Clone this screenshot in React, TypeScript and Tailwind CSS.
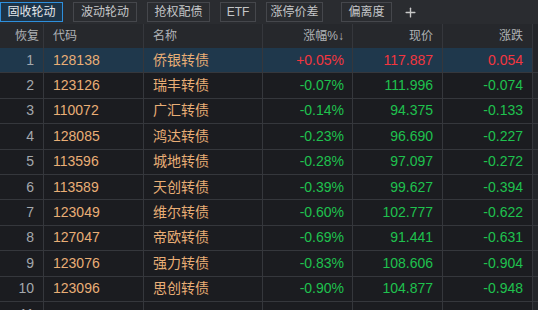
import { Plus } from "lucide-react";

type Bond = {
  code: string;
  name: string;
  pct: string;
  price: string;
  change: string;
};

const TABS = [
  { label: "固收轮动", w: "w-[63px]", active: true },
  { label: "波动轮动", w: "w-[64px]", active: false },
  { label: "抢权配债", w: "w-[63px]", active: false },
  { label: "ETF", w: "w-[36px]", active: false },
  { label: "涨停价差", w: "w-[57px]", active: false },
  { label: "偏离度", w: "w-[51px]", active: false },
];

const BONDS: Bond[] = [
  { code: "128138", name: "侨银转债", pct: "+0.05%", price: "117.887", change: "0.054" },
  { code: "123126", name: "瑞丰转债", pct: "-0.07%", price: "111.996", change: "-0.074" },
  { code: "110072", name: "广汇转债", pct: "-0.14%", price: "94.375", change: "-0.133" },
  { code: "128085", name: "鸿达转债", pct: "-0.23%", price: "96.690", change: "-0.227" },
  { code: "113596", name: "城地转债", pct: "-0.28%", price: "97.097", change: "-0.272" },
  { code: "113589", name: "天创转债", pct: "-0.39%", price: "99.627", change: "-0.394" },
  { code: "123049", name: "维尔转债", pct: "-0.60%", price: "102.777", change: "-0.622" },
  { code: "127047", name: "帝欧转债", pct: "-0.69%", price: "91.441", change: "-0.631" },
  { code: "123076", name: "强力转债", pct: "-0.83%", price: "108.606", change: "-0.904" },
  { code: "123096", name: "思创转债", pct: "-0.90%", price: "104.877", change: "-0.948" },
];

const COLS = "grid grid-cols-[44px_100px_119px_90px_90px_90px_5px]";
const cell = "border-r border-[#35373c] flex items-center";

export default function App() {
  return (
    <div
      className="w-[538px] h-[310px] overflow-hidden bg-[#1b1c20] text-[12px]"
      style={{ fontFamily: '"Liberation Sans", "Noto Sans CJK SC", sans-serif' }}
    >
      {/* strategy tabs */}
      <div className="h-[24px] bg-[#2a2c30] flex items-start pt-[2px]">
        {TABS.map((t, i) => (
          <button
            key={t.label}
            className={`${t.w} h-[20px] flex items-center justify-center border text-[12px] ${
              t.active
                ? "bg-[#1d3448] border-[#2e8fdc] text-[#e4e6e8]"
                : "bg-[#2a2c30] border-[#45474c] text-[#c4c6c8]"
            } ${i === 0 ? "ml-0" : i === 5 ? "ml-[18px]" : i === 4 ? "ml-[10px]" : "ml-[10px]"}`}
          >
            {t.label}
          </button>
        ))}
        <Plus className="ml-[11px] mt-[3px] h-[15px] w-[15px] text-[#c8c8c8]" strokeWidth={2.2} />
      </div>

      {/* column header */}
      <div className={`${COLS} h-[24px] bg-[#26282c] text-[#b0b3b7]`}>
        <div className={`${cell} justify-end pr-[4px]`}>恢复</div>
        <div className={`${cell} pl-[9px]`}>代码</div>
        <div className={`${cell} pl-[9px]`}>名称</div>
        <div className={`${cell} justify-end pr-[8px]`}>涨幅%↓</div>
        <div className={`${cell} justify-end pr-[9px]`}>现价</div>
        <div className={`${cell} justify-end pr-[9px]`}>涨跌</div>
        <div className="bg-[#232529]" />
      </div>

      {/* rows */}
      {BONDS.map((b, i) => {
        const up = b.pct.startsWith("+");
        const tone = up ? "text-[#f2363f]" : "text-[#1fc14e]";
        return (
          <div
            key={b.code}
            className={`${COLS} h-[25.4px] border-b border-[#35373c] text-[14px] ${
              i === 0 ? "bg-[#1f384c]" : "bg-[#1b1c20]"
            }`}
          >
            <div className={`${cell} justify-end pr-[9px] text-[#a4a8ad]`}>{i + 1}</div>
            <div className={`${cell} pl-[9px] text-[#e9ae76]`}>{b.code}</div>
            <div className={`${cell} pl-[9px] text-[#e9ae76]`}>{b.name}</div>
            <div className={`${cell} justify-end pr-[8px] ${tone}`}>{b.pct}</div>
            <div className={`${cell} justify-end pr-[9px] ${tone}`}>{b.price}</div>
            <div className={`${cell} justify-end pr-[9px] ${tone}`}>{b.change}</div>
            <div className="bg-[#232529]" />
          </div>
        );
      })}

      <div className={`${COLS} h-[25.4px] text-[14px]`}>
        <div className={`${cell} justify-end pr-[9px] text-[#a4a8ad]`}>11</div>
        <div className={cell} />
        <div className={cell} />
        <div className={cell} />
        <div className={cell} />
        <div className={cell} />
        <div className="bg-[#232529]" />
      </div>
    </div>
  );
}
